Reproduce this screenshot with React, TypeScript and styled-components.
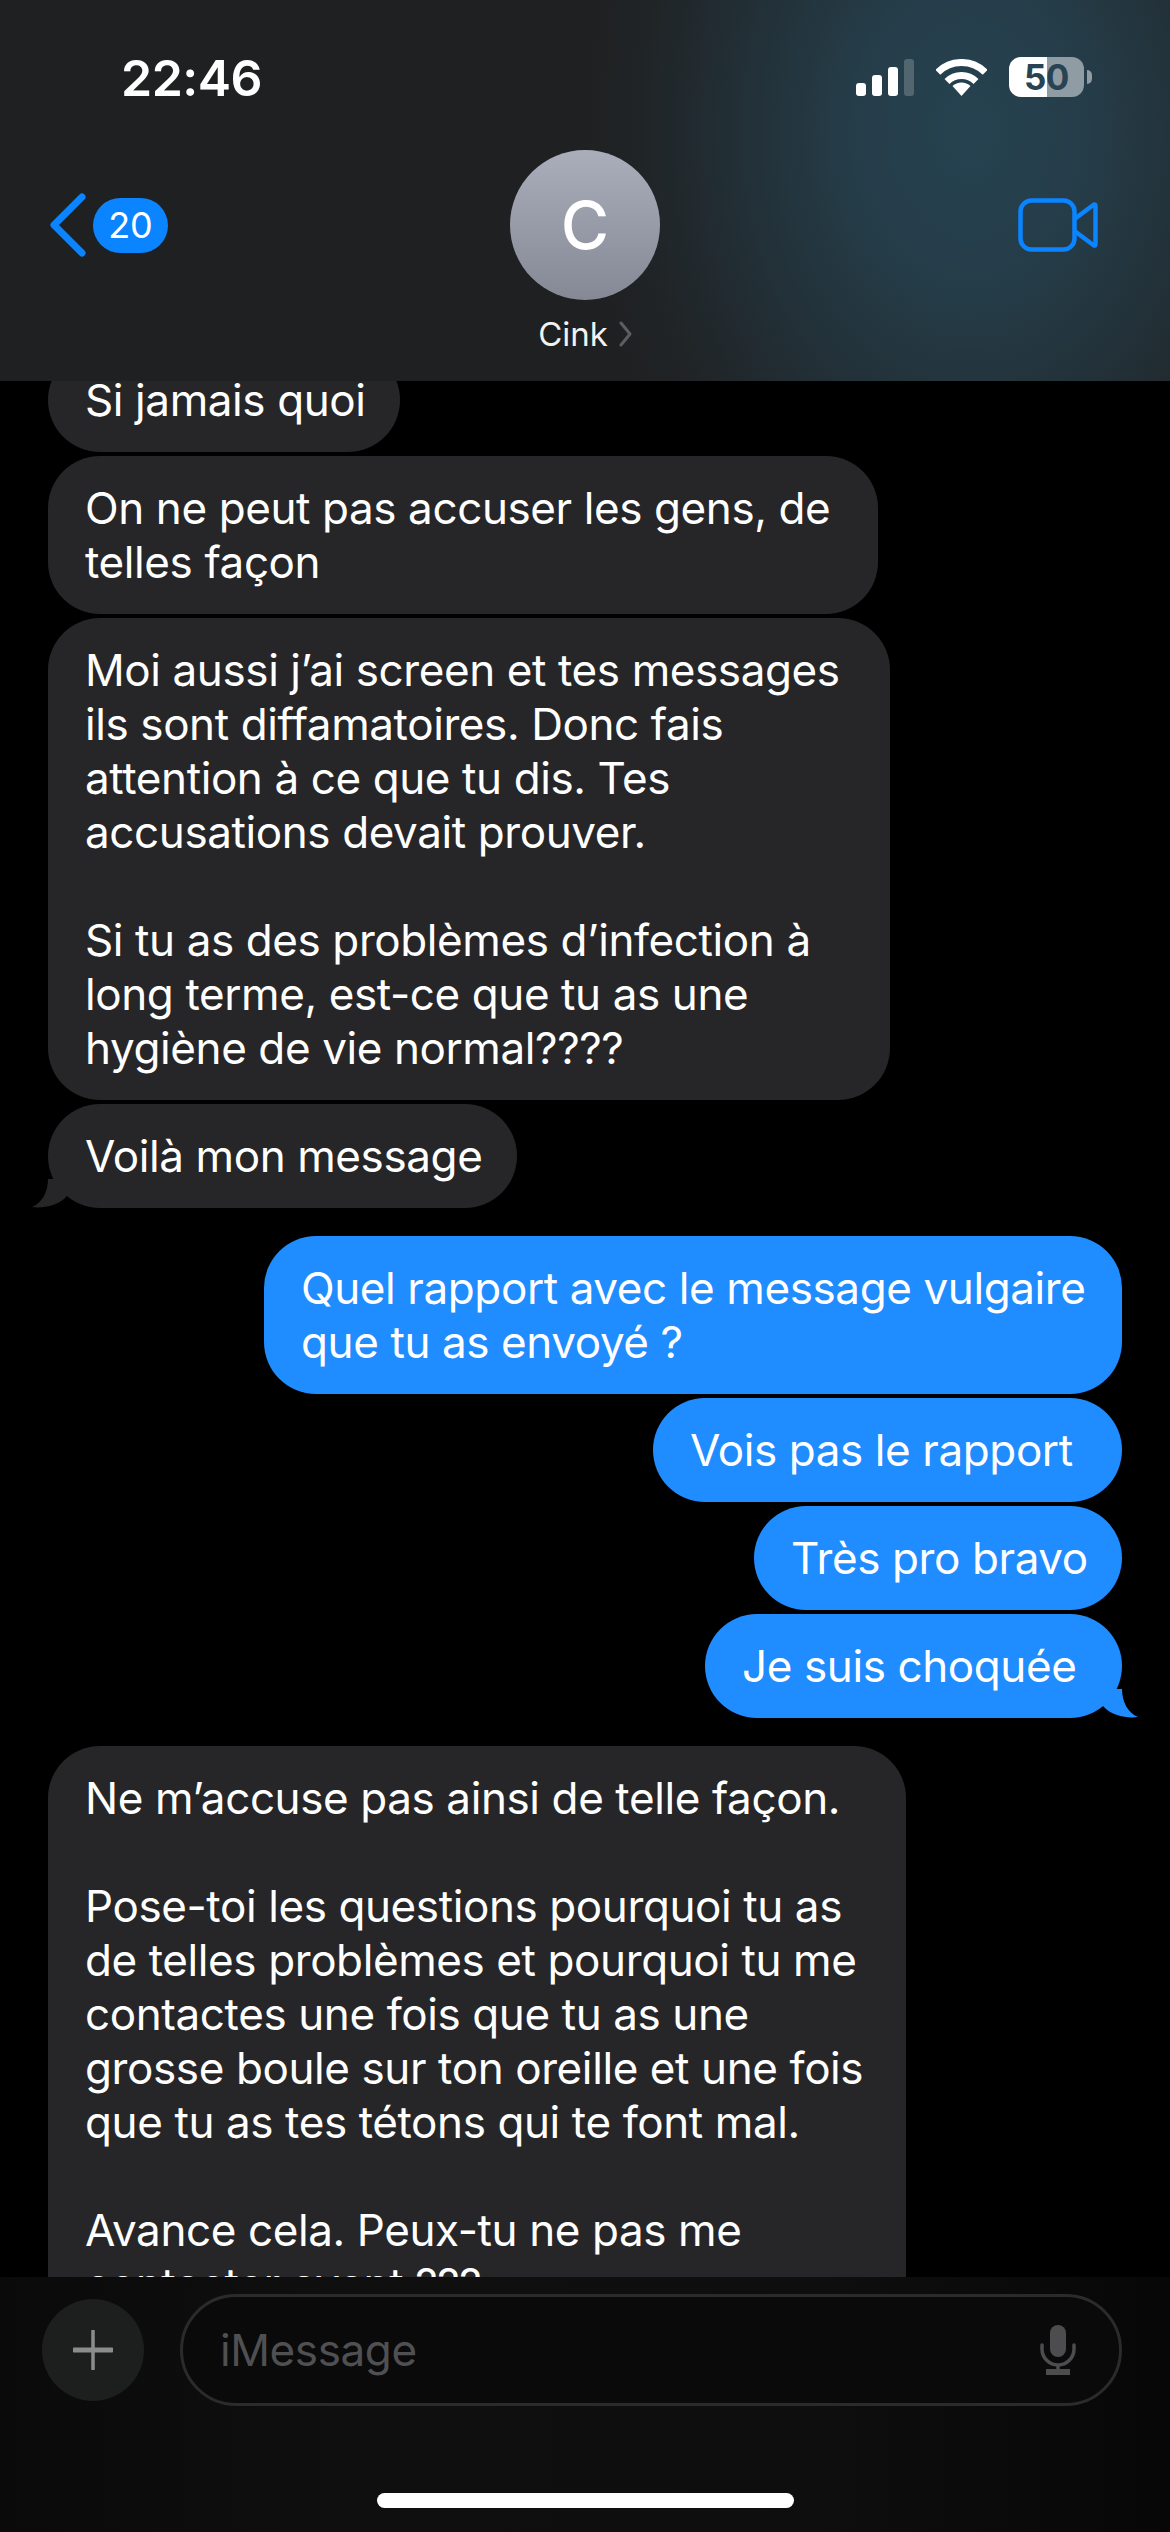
import React from "react";
import styled, { createGlobalStyle } from "styled-components";

const GlobalStyle = createGlobalStyle`
  html, body {
    margin: 0;
    padding: 0;
    background: #000;
  }
  * {
    box-sizing: border-box;
  }
`;

const Screen = styled.div`
  width: 1170px;
  height: 2532px;
  display: flex;
  flex-direction: column;
  overflow: hidden;
  background: #000;
  color: #fff;
  font-family: Inter, "Liberation Sans", sans-serif;
`;

const Header = styled.header`
  flex: 0 0 381px;
  display: flex;
  flex-direction: column;
  background:
    radial-gradient(
      ellipse 390px 520px at 970px 130px,
      #264250 0%,
      rgba(38, 66, 80, 0.85) 30%,
      rgba(38, 66, 80, 0.45) 60%,
      rgba(38, 66, 80, 0.12) 85%,
      rgba(38, 66, 80, 0) 100%
    ),
    #1f2021;
`;

const StatusBar = styled.div`
  height: 150px;
  flex: none;
  display: flex;
  justify-content: space-between;
  align-items: flex-start;
  padding: 50px 86px 0 121px;
`;

const Clock = styled.div`
  font-size: 50px;
  line-height: 56px;
  font-weight: 600;
  letter-spacing: -0.5px;
`;

const StatusIcons = styled.div`
  display: flex;
  align-items: center;
  gap: 22px;
  padding-top: 7px;
`;

const Signal = styled.div`
  display: flex;
  align-items: flex-end;
  gap: 6px;
  height: 37px;
`;

const SignalBar = styled.span<{ $h: number; $off?: boolean }>`
  width: 10px;
  height: ${(p) => p.$h}px;
  border-radius: 3px;
  background: ${(p) => (p.$off ? "#52666f" : "#fff")};
`;

const Battery = styled.div`
  position: relative;
  width: 75px;
  height: 40px;
  border-radius: 12px;
  background: linear-gradient(90deg, #fff 0 38px, #8f9ca3 38px 100%);
  display: flex;
  align-items: center;
  justify-content: center;
  color: #274354;
  font-size: 35px;
  font-weight: 700;
  letter-spacing: -0.5px;
  &::after {
    content: "";
    position: absolute;
    left: 78px;
    top: 13px;
    width: 5px;
    height: 14px;
    border-radius: 0 7px 7px 0;
    background: #8f9ca3;
  }
`;

const NavBar = styled.div`
  display: grid;
  grid-template-columns: 1fr auto 1fr;
  padding: 0 50px;
`;

const BackLink = styled.div`
  display: flex;
  align-items: center;
  gap: 7px;
  height: 150px;
`;

const Badge = styled.span`
  width: 75px;
  height: 55px;
  border-radius: 28px;
  background: #0a84ff;
  display: flex;
  align-items: center;
  justify-content: center;
  font-size: 36px;
  font-weight: 400;
`;

const Contact = styled.div`
  display: flex;
  flex-direction: column;
  align-items: center;
  gap: 14px;
`;

const Avatar = styled.div`
  width: 150px;
  height: 150px;
  border-radius: 50%;
  background: linear-gradient(180deg, #aaaebb 0%, #858995 100%);
  display: flex;
  align-items: center;
  justify-content: center;
  font-size: 66px;
  font-weight: 500;
`;

const ContactName = styled.div`
  display: flex;
  align-items: center;
  gap: 11px;
  font-size: 33px;
  line-height: 40px;
  color: #f2f2f2;
`;

const VideoButton = styled.div`
  display: flex;
  align-items: center;
  justify-content: flex-end;
  height: 150px;
  padding-right: 22px;
`;

const Thread = styled.main`
  flex: 1;
  min-height: 0;
  overflow: hidden;
  display: flex;
  flex-direction: column;
  padding: 0 48px;
`;

const ScrollOffset = styled.div`
  display: flex;
  flex-direction: column;
  margin-top: -37px;
`;

const Bubble = styled.div<{ $mine?: boolean; $spaced?: boolean; $width: number }>`
  position: relative;
  flex: none;
  width: ${(p) => p.$width}px;
  align-self: ${(p) => (p.$mine ? "flex-end" : "flex-start")};
  margin-top: ${(p) => (p.$spaced ? 28 : 4)}px;
  padding: 25px 0 25px 37px;
  border-radius: 52px;
  background: ${(p) => (p.$mine ? "#1f8cff" : "#262628")};
  font-size: 44px;
  line-height: 54px;
  font-weight: 380;
  letter-spacing: -0.4px;
  white-space: pre;
`;

const Tail = styled.svg<{ $mine?: boolean }>`
  position: absolute;
  bottom: 0;
  ${(p) => (p.$mine ? "right: -16px; transform: scaleX(-1);" : "left: -16px;")}
  width: 60px;
  height: 29px;
  fill: ${(p) => (p.$mine ? "#1f8cff" : "#262628")};
`;

const Composer = styled.footer`
  flex: 0 0 255px;
  position: relative;
  background: linear-gradient(90deg, #0a0a0a 0%, #0f0f0f 30%, #0e0e0e 70%, #070707 100%);
  padding: 17px 48px 0 42px;
`;

const ComposerRow = styled.div`
  display: flex;
  align-items: center;
  gap: 36px;
`;

const PlusButton = styled.div`
  width: 102px;
  height: 102px;
  flex: none;
  border-radius: 50%;
  background: #1d1e1e;
  display: flex;
  align-items: center;
  justify-content: center;
`;

const InputPill = styled.div`
  flex: 1;
  height: 112px;
  border: 3px solid #2b2b2c;
  border-radius: 56px;
  display: flex;
  align-items: center;
  justify-content: space-between;
  padding: 0 43px 0 37px;
  background: #0a0a0a;
`;

const Placeholder = styled.span`
  font-size: 44px;
  font-weight: 380;
  letter-spacing: -0.4px;
  color: #505052;
`;

const HomeIndicator = styled.div`
  position: absolute;
  left: 377px;
  bottom: 24px;
  width: 417px;
  height: 15px;
  border-radius: 8px;
  background: #fff;
`;

type Message = { text: string; width: number; mine?: boolean; spaced?: boolean; tail?: boolean };

const messages: Message[] = [
  { text: "Si jamais quoi", width: 352 },
  { text: "On ne peut pas accuser les gens, de\ntelles façon", width: 830 },
  {
    text: "Moi aussi j’ai screen et tes messages\nils sont diffamatoires. Donc fais\nattention à ce que tu dis. Tes\naccusations devait prouver.\n\nSi tu as des problèmes d’infection à\nlong terme, est-ce que tu as une\nhygiène de vie normal????",
    width: 842,
  },
  { text: "Voilà mon message", width: 469, tail: true },
  { text: "Quel rapport avec le message vulgaire\nque tu as envoyé ?", width: 858, mine: true, spaced: true },
  { text: "Vois pas le rapport", width: 469, mine: true },
  { text: "Très pro bravo", width: 368, mine: true },
  { text: "Je suis choquée", width: 417, mine: true, tail: true },
  {
    text: "Ne m’accuse pas ainsi de telle façon.\n\nPose-toi les questions pourquoi tu as\nde telles problèmes et pourquoi tu me\ncontactes une fois que tu as une\ngrosse boule sur ton oreille et une fois\nque tu as tes tétons qui te font mal.\n\nAvance cela. Peux-tu ne pas me\ncontacter avant ???",
    width: 858,
    spaced: true,
  },
];

const WifiIcon = () => (
  <svg width="51" height="37" viewBox="0 0 51 37" fill="none" stroke="#fff" strokeWidth="7">
    <path d="M1.8 13.3A33.5 33.5 0 0 1 49.2 13.3" />
    <path d="M11 22.5A20.5 20.5 0 0 1 40 22.5" />
    <path d="M25.5 37L16.5 27A13 13 0 0 1 34.5 27Z" fill="#fff" stroke="none" />
  </svg>
);

const BackChevron = () => (
  <svg width="36" height="64" viewBox="0 0 36 64" fill="none" stroke="#0a84ff" strokeWidth="7" strokeLinecap="round" strokeLinejoin="round">
    <path d="M32 4L4 32L32 60" />
  </svg>
);

const SmallChevron = () => (
  <svg width="13" height="26" viewBox="0 0 13 26" fill="none" stroke="#5a5f63" strokeWidth="3" strokeLinecap="round" strokeLinejoin="round">
    <path d="M2 2L11 13L2 24" />
  </svg>
);

const VideoIcon = () => (
  <svg width="80" height="54" viewBox="0 0 80 54" fill="none" stroke="#0a84ff" strokeWidth="4.5" strokeLinejoin="round">
    <rect x="2.5" y="2.5" width="54" height="49" rx="11" />
    <path d="M56.5 21L76 6.5Q77.5 6 77.5 8V46Q77.5 48 76 47.5L56.5 33" />
  </svg>
);

const PlusIcon = () => (
  <svg width="40" height="40" viewBox="0 0 40 40" fill="none" stroke="#8c8c8c" strokeLinecap="round">
    <path d="M1 20H39" strokeWidth="5" />
    <path d="M20 1V39" strokeWidth="3.5" />
  </svg>
);

const MicIcon = () => (
  <svg width="36" height="50" viewBox="0 0 36 50" fill="none" stroke="#4d4d4f" strokeWidth="3.5">
    <rect x="10" y="0" width="16" height="32" rx="8" fill="#4d4d4f" stroke="none" />
    <path d="M2 20V24A16 16 0 0 0 34 24V20" strokeLinecap="round" />
    <path d="M18 40V46" />
    <path d="M6 47H30" strokeWidth="6" />
  </svg>
);

export default function App() {
  return (
    <Screen>
      <GlobalStyle />
      <Header>
        <StatusBar>
          <Clock>22:46</Clock>
          <StatusIcons>
            <Signal>
              <SignalBar $h={13} />
              <SignalBar $h={21} />
              <SignalBar $h={29} />
              <SignalBar $h={37} $off />
            </Signal>
            <WifiIcon />
            <Battery>50</Battery>
          </StatusIcons>
        </StatusBar>
        <NavBar>
          <BackLink>
            <BackChevron />
            <Badge>20</Badge>
          </BackLink>
          <Contact>
            <Avatar>C</Avatar>
            <ContactName>
              Cink
              <SmallChevron />
            </ContactName>
          </Contact>
          <VideoButton>
            <VideoIcon />
          </VideoButton>
        </NavBar>
      </Header>
      <Thread>
        <ScrollOffset>
          {messages.map((m) => (
            <Bubble key={m.text} $mine={m.mine} $spaced={m.spaced} $width={m.width}>
              {m.text}
              {m.tail && (
                <Tail $mine={m.mine} viewBox="0 0 60 29">
                  <path d="M16 0C16 13 10 24 0 28C10 29.5 27 27 35 17L60 0Z" />
                </Tail>
              )}
            </Bubble>
          ))}
        </ScrollOffset>
      </Thread>
      <Composer>
        <ComposerRow>
          <PlusButton>
            <PlusIcon />
          </PlusButton>
          <InputPill>
            <Placeholder>iMessage</Placeholder>
            <MicIcon />
          </InputPill>
        </ComposerRow>
        <HomeIndicator />
      </Composer>
    </Screen>
  );
}
